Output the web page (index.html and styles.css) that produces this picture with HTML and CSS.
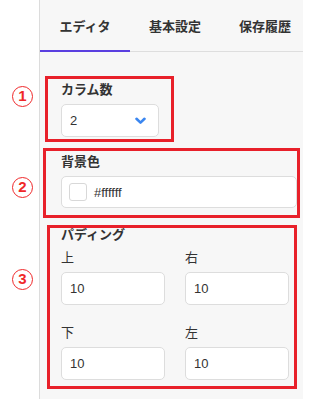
FILE: index.html
```html
<!DOCTYPE html>
<html lang="ja">
<head>
<meta charset="utf-8">
<link rel="stylesheet" href="styles.css">
</head>
<body>
<div class="frame">
  <div class="gutter"></div>
  <div class="panel">
    <div class="tabs">
      <div class="tab active">エディタ</div>
      <div class="tab">基本設定</div>
      <div class="tab">保存履歴</div>
    </div>
    <div class="content">
      <div class="field">
        <div class="label">カラム数</div>
        <div class="select">
          <span>2</span>
          <svg class="chev" width="11" height="8" viewBox="0 0 11 8"><polyline points="1.5,1.8 5.5,5.6 9.5,1.8" fill="none" stroke="#3a86f0" stroke-width="2.6" stroke-linecap="round" stroke-linejoin="round"/></svg>
        </div>
      </div>
      <div class="field">
        <div class="label">背景色</div>
        <div class="input color">
          <span class="swatch"></span>
          <span>#ffffff</span>
        </div>
      </div>
      <div class="field padding">
        <div class="label">パディング</div>
        <div class="grid">
          <div class="sub">
            <div class="sublabel">上</div>
            <div class="input">10</div>
          </div>
          <div class="sub">
            <div class="sublabel">右</div>
            <div class="input">10</div>
          </div>
          <div class="sub">
            <div class="sublabel">下</div>
            <div class="input">10</div>
          </div>
          <div class="sub">
            <div class="sublabel">左</div>
            <div class="input">10</div>
          </div>
        </div>
      </div>
    </div>
  </div>
  <div class="mark m1"></div>
  <div class="mark m2"></div>
  <div class="mark m3"></div>
  <div class="num n1">1</div>
  <div class="num n2">2</div>
  <div class="num n3">3</div>
</div>
</body>
</html>
```

FILE: styles.css
```css
* { box-sizing: border-box; }
html, body { margin: 0; padding: 0; background: #fff; }
body {
  font-family: "Liberation Sans", "Noto Sans CJK JP", sans-serif;
  color: #333;
  font-size: 13px;
}
.frame {
  position: relative;
  display: flex;
  width: 303px;
  height: 399px;
  overflow: hidden;
}
.gutter {
  width: 40px;
  flex: none;
  background: #fff;
  border-right: 1px solid #dcdcdc;
}
.panel {
  flex: 1;
  background: #f7f7f7;
}
.tabs {
  display: flex;
  border-bottom: 1px solid #dedede;
  height: 52px;
}
.tab {
  width: 90px;
  flex: none;
  height: 52px;
  margin-bottom: -1px;
  padding-top: 3px;
  line-height: 47px;
  text-align: center;
  font-weight: 700;
  font-size: 13px;
  color: #333;
  border-bottom: 2px solid transparent;
}
.tab.active { border-bottom-color: #5a3fe0; }
.content {
  padding: 29px 13px 0 21px;
  display: flex;
  flex-direction: column;
  gap: 16px;
}
.label {
  font-weight: 700;
  line-height: 18px;
  height: 18px;
  margin-bottom: 5px;
}
.padding .label {
  margin-top: 2px;
  margin-bottom: 0;
}
.select, .input {
  background: #fff;
  border: 1px solid #dddddd;
  border-radius: 5px;
  height: 33px;
  display: flex;
  align-items: center;
  padding: 0 8px;
  color: #333;
}
.select {
  width: 98px;
  justify-content: space-between;
  padding-right: 12px;
}
.input.color {
  height: 32px;
  padding-left: 7px;
  gap: 7px;
}
.swatch {
  width: 18px;
  height: 18px;
  border: 1px solid #d8d8d8;
  border-radius: 3px;
  background: #fff;
}
.grid {
  display: grid;
  grid-template-columns: 104px 104px;
  column-gap: 20px;
  row-gap: 19px;
  margin-top: 5px;
}
.sublabel {
  line-height: 18px;
  height: 18px;
  margin-bottom: 5px;
}
.mark {
  position: absolute;
  border: 3px solid #e8202a;
}
.m1 { left: 45px; top: 76px; width: 129px; height: 66px; }
.m2 { left: 43px; top: 148px; width: 257px; height: 70px; }
.m3 { left: 47px; top: 225px; width: 250px; height: 164px; }
.num {
  position: absolute;
  left: 12px;
  width: 21px;
  height: 21px;
  border: 1.7px solid #f0282a;
  border-radius: 50%;
  color: #f0282a;
  font-weight: 700;
  font-size: 15px;
  line-height: 18px;
  text-align: center;
  font-family: "Liberation Sans", sans-serif;
}
.n1 { top: 86px; }
.n2 { top: 177px; }
.n3 { top: 269px; }
```
